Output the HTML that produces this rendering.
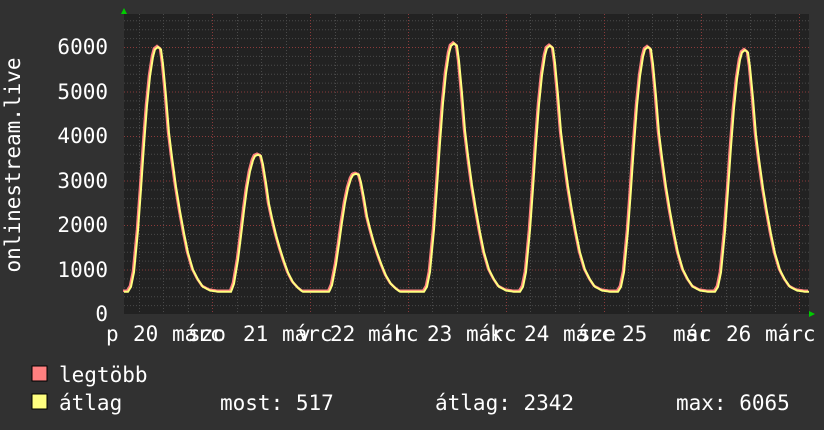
<!DOCTYPE html>
<html><head><meta charset="utf-8"><style>
html,body{margin:0;padding:0;background:#313131;}
svg{display:block}
text{font-family:"DejaVu Sans Mono","Liberation Mono",monospace;fill:#fff;font-size:21px}
</style></head><body>
<svg id="s" width="824" height="430" xmlns="http://www.w3.org/2000/svg">
<rect width="824" height="430" fill="#313131"/>
<rect x="124" y="14" width="685" height="300" fill="#222"/>
<g id="grid"></g>
<path id="mx" fill="none" stroke="#ff8080" stroke-width="2.5"/>
<path id="av" fill="none" stroke="#ffff80" stroke-width="2"/>
<polygon points="121,14 127,14 124,8" fill="#00cc00"/>
<polygon points="809,311 809,317 815,314" fill="#00cc00"/>
<g text-anchor="end">
<text x="108" y="54">6000</text><text x="108" y="99">5000</text><text x="108" y="143">4000</text>
<text x="108" y="188">3000</text><text x="108" y="232">2000</text><text x="108" y="277">1000</text>
<text x="108" y="321">0</text>
</g>
<text transform="translate(20,165) rotate(-90)" text-anchor="middle">onlinestream.live</text>
<g>
<text x="106" y="341">p</text>
<text x="133" y="341">20</text><text x="172" y="341">márc</text><text x="188" y="341">szo</text>
<text x="243" y="341">21</text><text x="282" y="341">márc</text><text x="298" y="341">v</text>
<text x="330" y="341">22</text><text x="368" y="341">márc</text><text x="394" y="341">h</text>
<text x="427" y="341">23</text><text x="466" y="341">márc</text><text x="490" y="341">k</text>
<text x="524" y="341">24</text><text x="563" y="341">márc</text><text x="578" y="341">sze</text>
<text x="622" y="341">25</text><text x="673" y="341">már</text><text x="686" y="341">sc</text>
<text x="726" y="341">26</text><text x="765" y="341">márc</text>
</g>
<rect x="32" y="366" width="15" height="15" fill="#ff8080" stroke="#000"/>
<rect x="32" y="394" width="15" height="15" fill="#ffff80" stroke="#000"/>
<text x="59" y="382">legtöbb</text>
<text x="59" y="410">átlag</text>
<text x="220" y="410">most: 517</text>
<text x="435" y="410">átlag: 2342</text>
<text x="676" y="410">max: 6065</text>
</svg>
<script>
var g=document.getElementById('grid'),h='';
function ln(x1,y1,x2,y2,c){h+='<line x1="'+x1+'" y1="'+y1+'" x2="'+x2+'" y2="'+y2+'" stroke="'+c+'" stroke-width="1" stroke-dasharray="1,2"/>';}
for(var v=200;v<=6600;v+=200){var y=314-v*0.0445;if(y<14)break;ln(124,y+.5,809,y+.5,(v%1000==0)?'#8a3a3a':'#4a4a4a');}
for(var k=0;k<29;k++){var x=Math.round(139+k*24.45)+.5;if(x>809)break;var major=((k-3)%4==0);ln(x,14,x,314,major?'#8a3a3a':'#4a4a4a');}
g.innerHTML=h;
var peaks=[[158,6000],[258,3580],[356,3150],[454,6080],[550,6030],[648,6000],[745,5930]];
var prof=[[-30,0],[-27,.02],[-24,.08],[-20,.25],[-17,.42],[-14,.6],[-11,.76],[-8,.88],[-5,.96],[-3,.99],[0,1],[3,.99],[5,.93],[8,.8],[11,.65],[14,.55],[18,.43],[22,.33],[26,.24],[30,.16],[35,.09],[40,.05],[45,.02],[52,.005],[60,0]];
function val(x){var best=500;for(var i=0;i<peaks.length;i++){var d=x-peaks[i][0],H=peaks[i][1];if(d<-30||d>60)continue;for(var j=0;j<prof.length-1;j++){if(d>=prof[j][0]&&d<=prof[j+1][0]){var t=(d-prof[j][0])/(prof[j+1][0]-prof[j][0]);var f=prof[j][1]+t*(prof[j+1][1]-prof[j][1]);var base=(i==1||i==2)?430:500;var vv=base+f*(H-base);if(vv>best)best=vv;}}}return best;}
var d1='',d2='';
for(var x=124;x<=809;x++){var v=val(x);var y=314-v*0.0445;d2+=(x==124?'M':'L')+x+','+y.toFixed(1);d1+=(x==124?'M':'L')+(x-1)+','+(y-1).toFixed(1);}
document.getElementById('mx').setAttribute('d',d1);
document.getElementById('av').setAttribute('d',d2);
</script>
</body></html>
